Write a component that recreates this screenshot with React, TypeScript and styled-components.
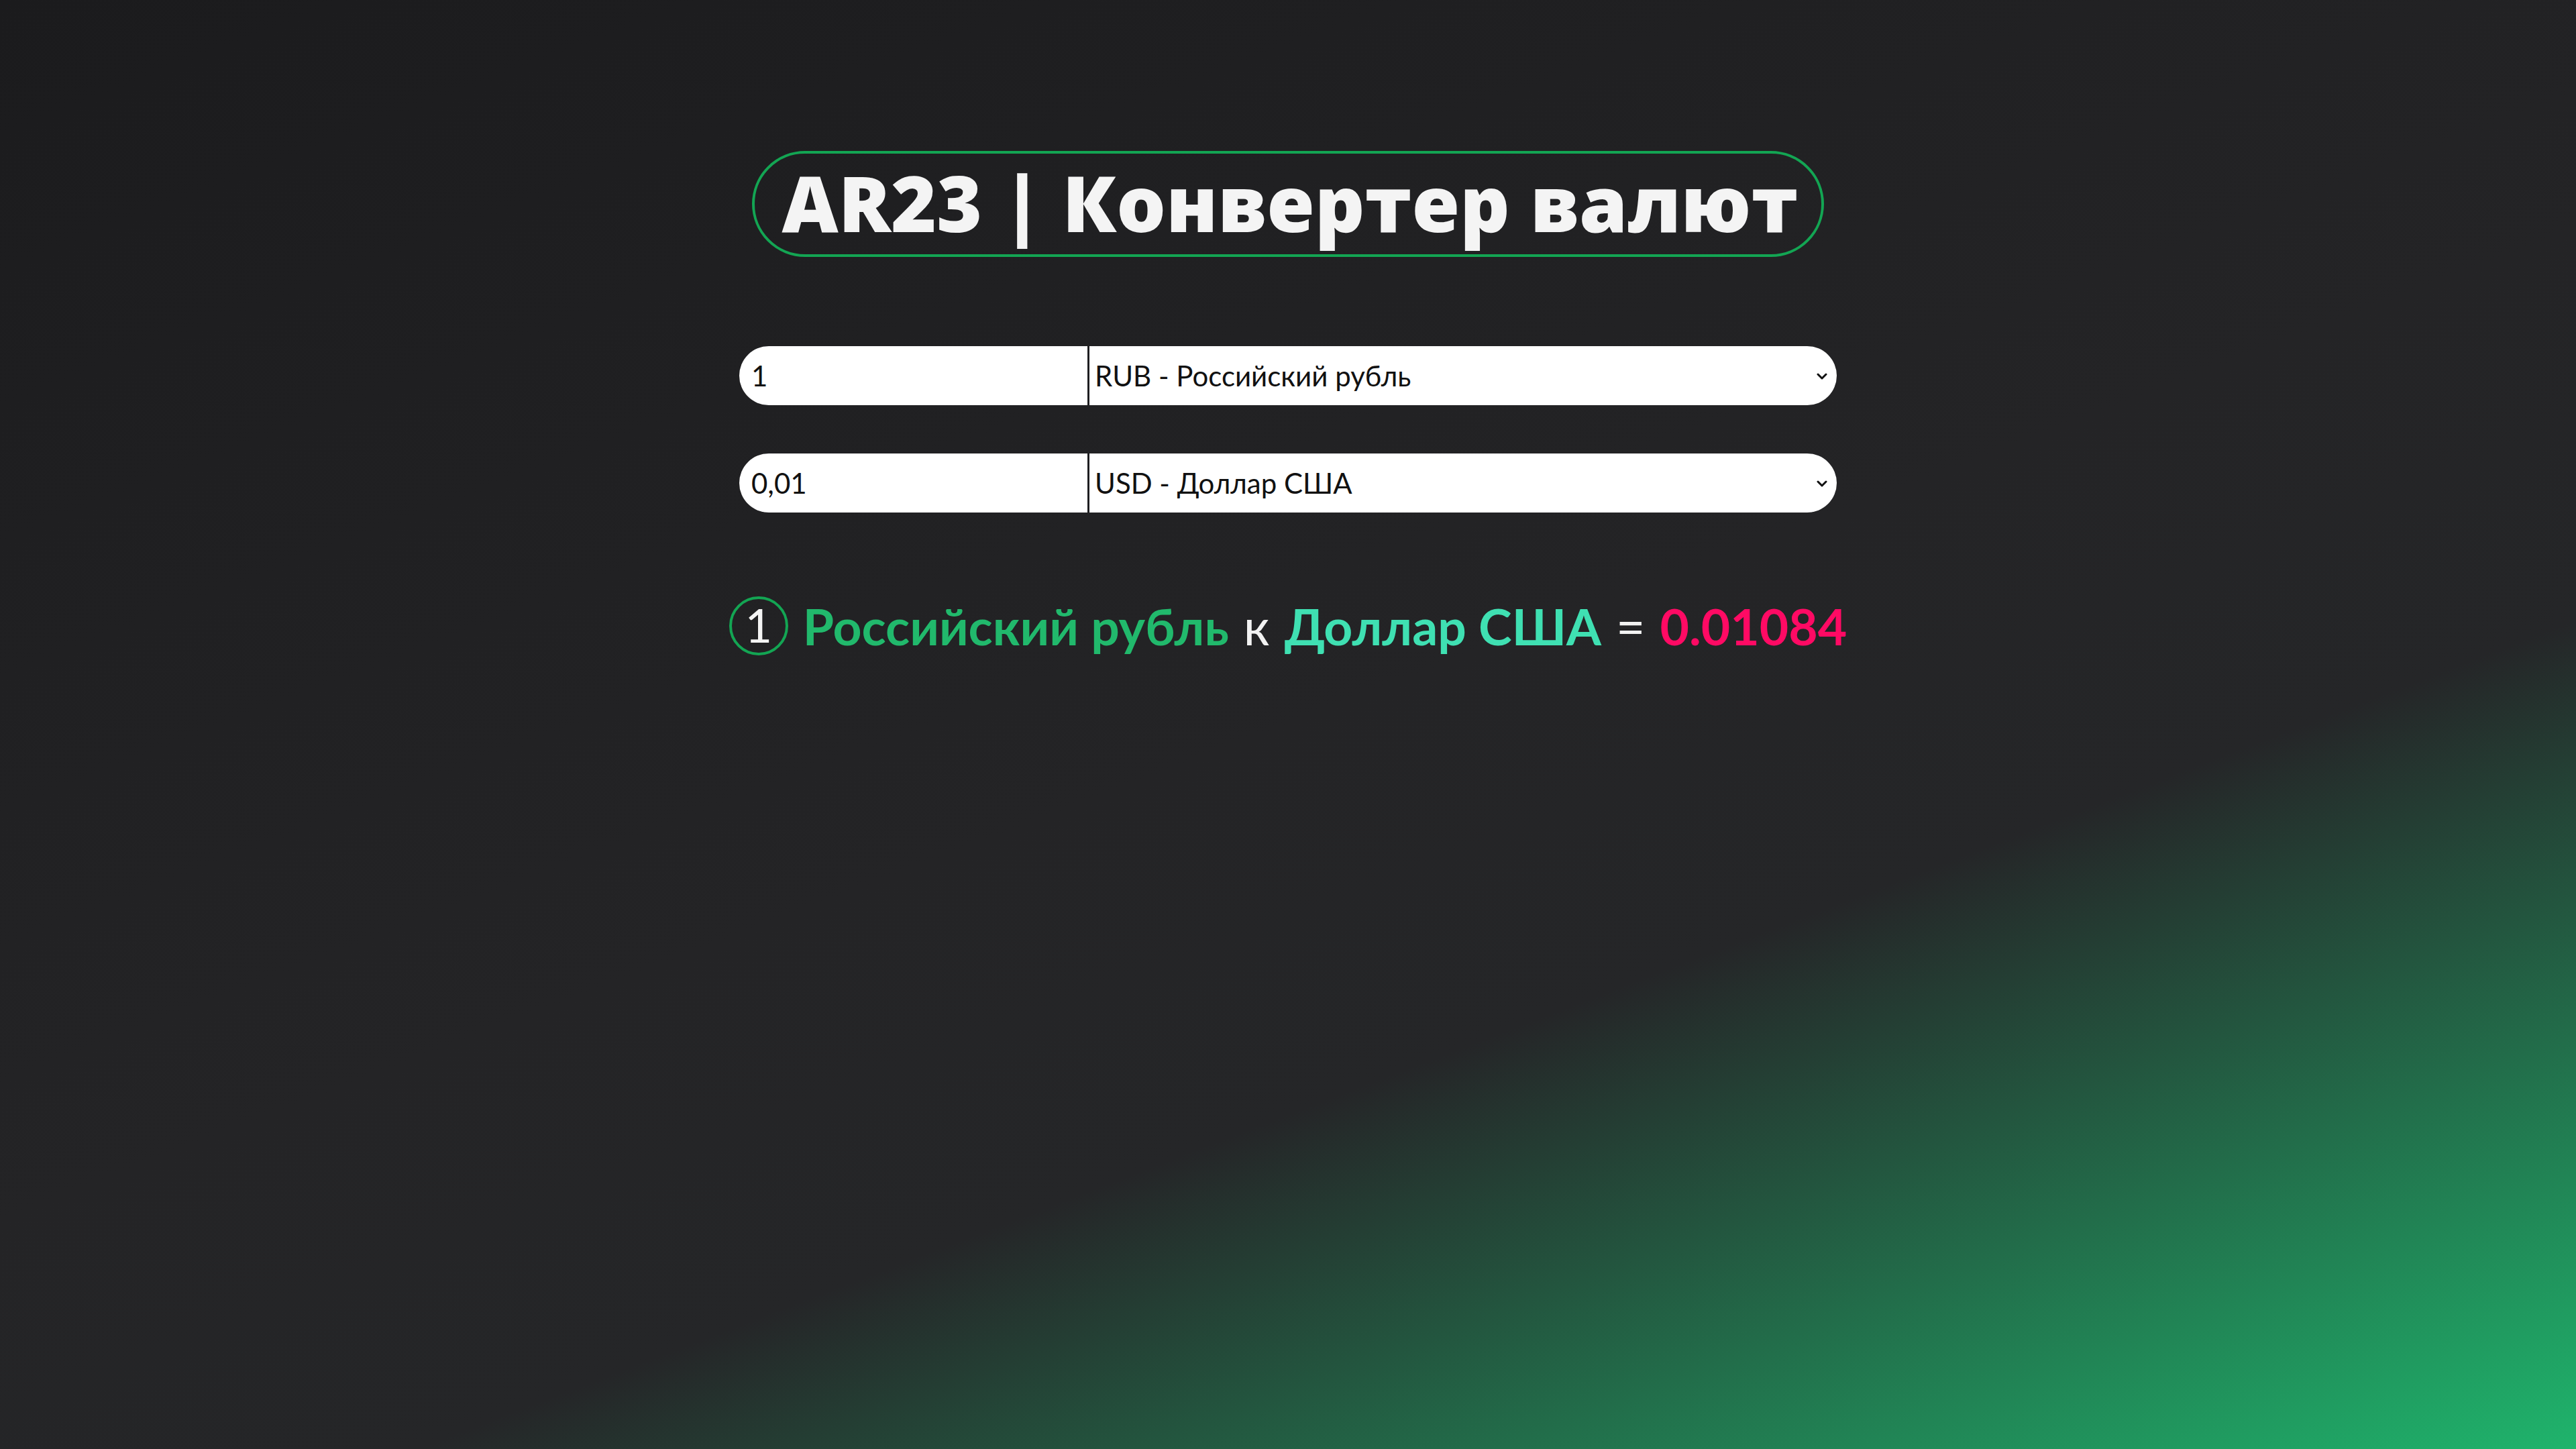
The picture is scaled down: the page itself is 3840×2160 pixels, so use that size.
import React, { useState } from "react";
import styled, { createGlobalStyle } from "styled-components";

const GlobalStyle = createGlobalStyle`
  html, body {
    margin: 0;
    padding: 0;
  }
  body {
    min-height: 100vh;
    font-family: "Lato", "Open Sans", sans-serif;
    background: linear-gradient(159deg, #1b1b1d 0%, #242426 50%, #252628 66%, #1fb46c 100%);
    background-attachment: fixed;
  }
  * { box-sizing: border-box; }
`;

const Page = styled.main`
  min-height: 100vh;
  display: flex;
  flex-direction: column;
  align-items: center;
  padding-top: 225px;
`;

const Title = styled.h1`
  margin: 0;
  height: 158px;
  display: flex;
  align-items: center;
  padding: 0 34px 6px 40px;
  border: 4px solid #13a553;
  border-radius: 80px;
  color: #f4f4f4;
  font-family: "Open Sans", "Lato", sans-serif;
  font-weight: 800;
  font-size: 116px;
  letter-spacing: 0px;
  white-space: nowrap;
`;

const Form = styled.section`
  margin-top: 133px;
  width: 1636px;
  display: flex;
  flex-direction: column;
  gap: 72px;
`;

const Row = styled.div`
  display: flex;
  height: 88px;
`;

const AmountInput = styled.input`
  width: 519px;
  height: 100%;
  border: none;
  outline: none;
  background: #ffffff;
  border-radius: 44px 0 0 44px;
  padding: 0 0 0 18px;
  font-family: "Lato", sans-serif;
  font-size: 42px;
  color: #111;
`;

const SelectWrap = styled.div`
  position: relative;
  flex: 1;
  height: 100%;
`;

const CurrencySelect = styled.select`
  appearance: none;
  width: 100%;
  height: 100%;
  border: none;
  border-left: 3px solid #1f1f21;
  outline: none;
  background: #ffffff;
  border-radius: 0 44px 44px 0;
  padding: 0 0 0 8px;
  font-family: "Lato", sans-serif;
  font-size: 42px;
  color: #111;
`;

const Chevron = styled.svg`
  position: absolute;
  right: 14px;
  top: 50%;
  width: 16px;
  height: 10px;
  margin-top: -4px;
  pointer-events: none;
`;

const Result = styled.p`
  margin: 124px 0 0;
  display: flex;
  align-items: center;
  gap: 22px;
  font-family: "Lato", sans-serif;
  font-size: 75px;
  color: #f2f2f2;
  white-space: nowrap;
`;

const Circle = styled.span`
  width: 88px;
  height: 88px;
  border: 4px solid #13a553;
  border-radius: 50%;
  display: flex;
  align-items: center;
  justify-content: center;
  font-weight: 400;
  font-size: 70px;
  color: #f4f4f4;
  line-height: 1;
  padding-bottom: 4px;
`;

const Words = styled.span<{ $color: string; $bold?: boolean }>`
  color: ${(p) => p.$color};
  font-weight: ${(p) => (p.$bold ? 700 : 400)};
`;

const ChevronIcon = () => (
  <Chevron viewBox="0 0 16 10">
    <path d="M2 2 L8 8 L14 2" fill="none" stroke="#111" strokeWidth="3" strokeLinecap="round" strokeLinejoin="round" />
  </Chevron>
);

export default function App() {
  const [amount, setAmount] = useState("1");
  const [converted, setConverted] = useState("0,01");
  const [from, setFrom] = useState("RUB");
  const [to, setTo] = useState("USD");
  return (
    <>
      <GlobalStyle />
      <Page>
        <Title>AR23 | Конвертер валют</Title>
        <Form>
          <Row>
            <AmountInput value={amount} onChange={(e) => setAmount(e.target.value)} />
            <SelectWrap>
              <CurrencySelect value={from} onChange={(e) => setFrom(e.target.value)}>
                <option value="RUB">RUB - Российский рубль</option>
                <option value="USD">USD - Доллар США</option>
                <option value="EUR">EUR - Евро</option>
              </CurrencySelect>
              <ChevronIcon />
            </SelectWrap>
          </Row>
          <Row>
            <AmountInput value={converted} onChange={(e) => setConverted(e.target.value)} />
            <SelectWrap>
              <CurrencySelect value={to} onChange={(e) => setTo(e.target.value)}>
                <option value="RUB">RUB - Российский рубль</option>
                <option value="USD">USD - Доллар США</option>
                <option value="EUR">EUR - Евро</option>
              </CurrencySelect>
              <ChevronIcon />
            </SelectWrap>
          </Row>
        </Form>
        <Result>
          <Circle>1</Circle>
          <Words $color="#21b96c" $bold>Российский рубль</Words>
          <Words $color="#f2f2f2">к</Words>
          <Words $color="#3fe0b2" $bold>Доллар США</Words>
          <Words $color="#f2f2f2">=</Words>
          <Words $color="#ff0a64" $bold>0.01084</Words>
        </Result>
      </Page>
    </>
  );
}
